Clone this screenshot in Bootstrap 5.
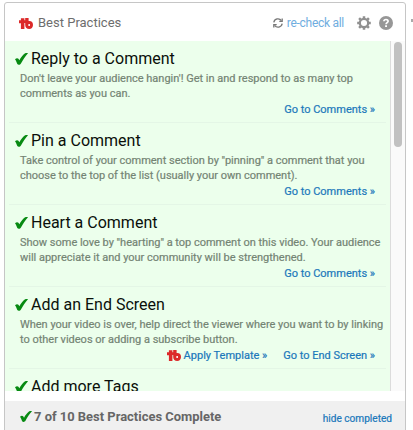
<!DOCTYPE html>
<html lang="en">
<head>
<meta charset="utf-8">
<meta name="viewport" content="width=device-width, initial-scale=1">
<title>Best Practices</title>
<link href="https://cdn.jsdelivr.net/npm/bootstrap@5.3.0/dist/css/bootstrap.min.css" rel="stylesheet">
<style>
body{font-family:Roboto,"Liberation Sans",sans-serif;background:#fff;overflow:hidden;height:430px}
a{text-decoration:none;color:#1b78bb}
.panel{width:402px;height:440px;margin:2px 0 0 4px;border:1px solid #c6c6c6;border-radius:3px}
.panel-head{height:38px;padding:2px 12px 0 14px;color:#6d6d6d;font-size:13px}
.tb{width:14px;height:11px;flex:none}
.head-title{margin-left:5px}
.recheck{color:#6fade0;font-size:12px;letter-spacing:-.28px}
.gear{margin:0 8px 0 13px}
.practices{height:350px}
.items{width:386px;background:#ecffec;border-right:1px solid #dcdcdc}
.practice{height:82px;margin:0 4px;padding:8px 0 0 6px;border-bottom:1px solid #e4f6e6}
.practice h2{font-size:16px;line-height:20px;font-weight:400;color:#0a0f0a;margin:0}
.tick{width:13px;height:12px;flex:none;margin-right:3px}
.desc{font-size:11px;line-height:15px;font-weight:400;letter-spacing:-.01px;color:#748474;-webkit-text-stroke:.2px #748474;margin:2px 0 0 5px;white-space:nowrap}
.links{font-size:11px;line-height:15px;font-weight:400;-webkit-text-stroke:.2px #1b78bb;padding-right:11px;margin-top:1px;gap:16px}
.links .tb{margin-right:3px}
.track{width:14px;background:#fafafa;padding:1px 3px}
.thumb{width:8px;height:105px;border-radius:4px;background:#c1c1c1}
.panel-foot{margin-top:10px;height:40px;background:#f0f0f0;padding:0 13px 9px 15px;color:#666}
.panel-foot .tick{width:12px;height:11px;margin-right:2px}
.total{font-size:12.95px;font-weight:700}
.hide-link{font-size:10.100px;font-weight:400;-webkit-text-stroke:.2px #1b78bb;padding-top:4px}
.edge{width:2px;height:3px;background:#aaa;top:19px;left:411px}
</style>
<script src="https://cdn.jsdelivr.net/npm/bootstrap@5.3.0/dist/js/bootstrap.bundle.min.js"></script>
</head>
<body>
<svg class="d-none">
<symbol id="logo" viewBox="0 0 14 11"><path fill="#dc2929" d="M1.900.3h3.500V11H1.900V5.200H0V2.200h1.900z"/><path fill="#dc2929" d="M5 2.200h2v2.700H5zM6.200 0h3.400v3h.8C12.700 3 14 4.600 14 6.900S12.500 11 10.200 11 6.200 9.600 6.200 7z"/><path fill="#fff" d="M9.400 5.900h1.500v2.100H9.400z"/></symbol>
<symbol id="check" viewBox="0 0 14 13" preserveAspectRatio="none"><path fill="#078a12" d="M0 6.800C1.400 5.300 3 5.300 3.700 6.300L4.700 7.900C6.200 4.900 8.400 2.300 10.500.6 11.600-.1 13.200 0 14 .2 11.200 3.300 8.700 7 6.400 11.500 5.600 13.100 3.300 13.300 2.500 12 1.700 10.200 1.100 8.100 0 6.800z"/></symbol>
</svg>
<main class="panel position-relative">
<header class="panel-head d-flex align-items-center">
<svg class="tb"><use href="#logo"/></svg><span class="head-title">Best Practices</span>
<a class="recheck ms-auto d-flex align-items-center" href="#"><svg class="me-1" width="10" height="10" viewBox="0 0 10 10" fill="none" stroke="#777" stroke-width="1.300"><path d="M.8 4.300A4.200 4.200 0 0 1 8.400 2.700M9.200 5.700A4.200 4.200 0 0 1 1.600 7.300"/><path d="M9.200.4v3H6.300M.8 9.600v-3h2.900"/></svg><span class="recheck-label">re-check all</span></a>
<svg class="gear" width="14" height="14" viewBox="0 0 14 14"><circle cx="7" cy="7" r="4.200" fill="none" stroke="#909090" stroke-width="2.300"/><g stroke="#909090" stroke-width="2.500"><path d="M7 .2v2M7 11.800v2M.2 7h2M11.800 7h2M2.100 2.100l1.500 1.500M10.400 10.400l1.500 1.500M2.100 11.900l1.500-1.500M10.400 3.600l1.500-1.500"/></g></svg>
<svg class="help" width="14" height="14" viewBox="0 0 14 14"><circle cx="7" cy="7" r="7" fill="#979797"/><path d="M4.900 5.300C5 2.800 9.200 3 9.100 5.300 9 6.700 7.100 6.600 7.100 8.300" fill="none" stroke="#fff" stroke-width="1.700"/><path fill="#fff" d="M6.100 9.300h1.900v1.800H6.100z"/></svg>
</header>
<section class="practices d-flex overflow-hidden">
<div class="items overflow-hidden">
<article class="practice"><h2 class="d-flex align-items-center"><svg class="tick"><use href="#check"/></svg><span>Reply to a Comment</span></h2><p class="desc">Don't leave your audience hangin'! Get in and respond to as many top<br>comments as you can.</p><div class="links d-flex justify-content-end"><a href="#">Go to Comments »</a></div></article>
<article class="practice"><h2 class="d-flex align-items-center"><svg class="tick"><use href="#check"/></svg><span>Pin a Comment</span></h2><p class="desc">Take control of your comment section by "pinning" a comment that you<br>choose to the top of the list (usually your own comment).</p><div class="links d-flex justify-content-end"><a href="#">Go to Comments »</a></div></article>
<article class="practice"><h2 class="d-flex align-items-center"><svg class="tick"><use href="#check"/></svg><span>Heart a Comment</span></h2><p class="desc">Show some love by "hearting" a top comment on this video. Your audience<br>will appreciate it and your community will be strengthened.</p><div class="links d-flex justify-content-end"><a href="#">Go to Comments »</a></div></article>
<article class="practice"><h2 class="d-flex align-items-center"><svg class="tick"><use href="#check"/></svg><span>Add an End Screen</span></h2><p class="desc">When your video is over, help direct the viewer where you want to by linking<br>to other videos or adding a subscribe button.</p><div class="links d-flex justify-content-end"><a class="d-flex align-items-center" href="#"><svg class="tb"><use href="#logo"/></svg>Apply Template »</a><a href="#">Go to End Screen »</a></div></article>
<article class="practice"><h2 class="d-flex align-items-center"><svg class="tick"><use href="#check"/></svg><span>Add more Tags</span></h2></article>
</div>
<div class="track"><div class="thumb"></div></div>
</section>
<footer class="panel-foot d-flex align-items-center">
<svg class="tick"><use href="#check"/></svg><span class="total">7 of 10 Best Practices Complete</span><a class="hide-link ms-auto" href="#">hide completed</a>
</footer>
</main>
<span class="edge position-absolute"></span>
</body>
</html>
